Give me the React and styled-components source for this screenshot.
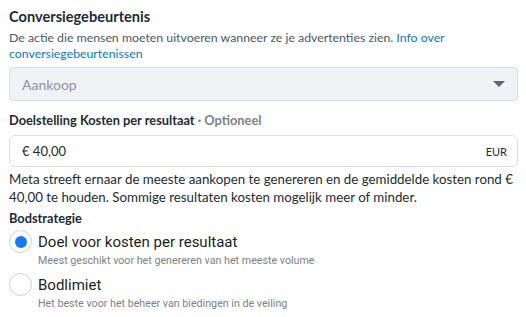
import React, { useState } from 'react';
import styled, { createGlobalStyle } from 'styled-components';

const GlobalStyle = createGlobalStyle`
  body {
    margin: 0;
    background: #fff;
    font-family: Lato, "Noto Sans", sans-serif;
    color: #1c2b33;
  }
`;

const Page = styled.div`
  width: 526px;
  padding: 8px 8px 0 9px;
  box-sizing: border-box;
`;

const Section = styled.div`
  display: flex;
  flex-direction: column;
`;

const Title = styled.div`
  font-size: ${p => (p.large ? 14.6 : 12.8)}px;
  font-weight: 700;
  line-height: 18px;
  margin-bottom: ${p => p.gap || 0}px;
`;

const Optional = styled.span`
  font-weight: 700;
  color: #7b8287;
`;

const Help = styled.div`
  font-size: 12.3px;
  line-height: 16px;
  color: #465a69;
`;

const InfoLink = styled.a`
  color: #0a78be;
  text-decoration: none;
`;

const Select = styled.div`
  display: flex;
  align-items: center;
  justify-content: space-between;
  height: 32px;
  margin: 5px 0 10px;
  padding: 0 12px;
  border: 1px solid #d9dde0;
  border-radius: 4px;
  background: #f0f2f5;
  color: #8d949e;
  font-size: 14px;
`;

const Caret = styled.span`
  width: 0;
  height: 0;
  border-left: 6px solid transparent;
  border-right: 6px solid transparent;
  border-top: 6px solid #606770;
`;

const Input = styled.div`
  display: flex;
  align-items: center;
  justify-content: space-between;
  height: 30px;
  margin: 6px 0 3px;
  padding: 0 10px 0 12px;
  border: 1px solid #d9dde0;
  border-radius: 6px;
  font-size: 13px;
  color: #1c2b33;
`;

const Currency = styled.span`
  font-size: 11px;
`;

const Body = styled.p`
  margin: 0 0 3px;
  font-size: 13.3px;
  line-height: 18px;
  color: #1c2b33;
`;

const Options = styled.div`
  display: flex;
  flex-direction: column;
  gap: 5px;
  font-family: Roboto, sans-serif;
`;

const Option = styled.label`
  display: grid;
  grid-template-columns: 23px 1fr;
  column-gap: 6px;
  align-items: center;
  cursor: pointer;
`;

const Radio = styled.span`
  width: 23px;
  height: 23px;
  box-sizing: border-box;
  border-radius: 50%;
  border: 1px solid #ccd0d5;
  display: flex;
  align-items: center;
  justify-content: center;
  &::after {
    content: '';
    width: 12px;
    height: 12px;
    border-radius: 50%;
    background: ${p => (p.checked ? '#1877f2' : 'transparent')};
  }
`;

const OptionLabel = styled.span`
  font-size: 15px;
  line-height: 20px;
  color: #1c1e21;
`;

const OptionHint = styled.span`
  grid-column: 2;
  font-size: 10.7px;
  line-height: 15px;
  color: #7b8287;
`;

const options = [
  { label: 'Doel voor kosten per resultaat', hint: 'Meest geschikt voor het genereren van het meeste volume' },
  { label: 'Bodlimiet', hint: 'Het beste voor het beheer van biedingen in de veiling' },
];

export default function App() {
  const [selected, setSelected] = useState(0);
  return (
    <Page>
      <GlobalStyle />
      <Section>
        <Title large gap={4}>Conversiegebeurtenis</Title>
        <Help>
          De actie die mensen moeten uitvoeren wanneer ze je advertenties zien.{' '}
          <InfoLink href="#">Info over conversiegebeurtenissen</InfoLink>
        </Help>
        <Select>
          <span>Aankoop</span>
          <Caret />
        </Select>
      </Section>
      <Section>
        <Title>
          Doelstelling Kosten per resultaat <Optional>· Optioneel</Optional>
        </Title>
        <Input>
          <span>€ 40,00</span>
          <Currency>EUR</Currency>
        </Input>
        <Body>
          Meta streeft ernaar de meeste aankopen te genereren en de gemiddelde kosten rond € 40,00 te houden.
          Sommige resultaten kosten mogelijk meer of minder.
        </Body>
      </Section>
      <Section>
        <Title gap={3}>Bodstrategie</Title>
        <Options>
          {options.map((o, i) => (
            <Option key={o.label} onClick={() => setSelected(i)}>
              <Radio checked={selected === i} />
              <OptionLabel>{o.label}</OptionLabel>
              <OptionHint>{o.hint}</OptionHint>
            </Option>
          ))}
        </Options>
      </Section>
    </Page>
  );
}
